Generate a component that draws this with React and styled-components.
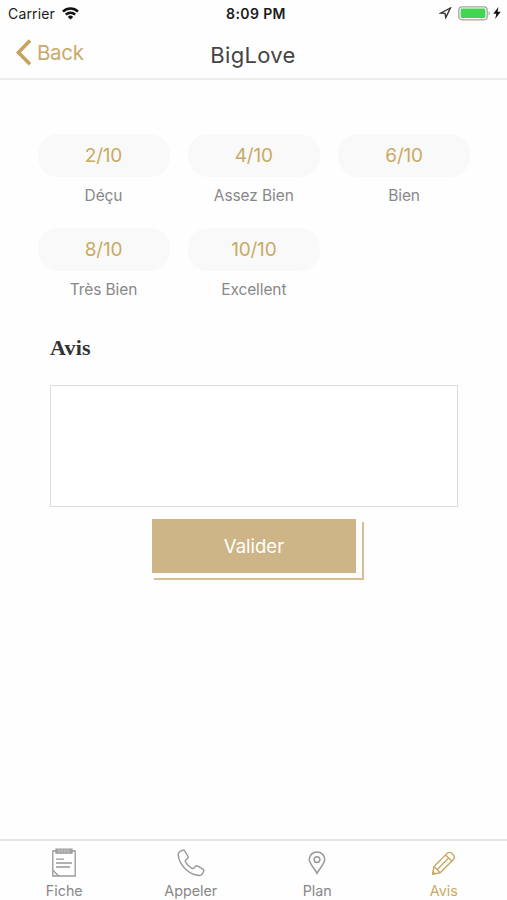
import styled, { createGlobalStyle } from 'styled-components'

const ratings = [
    { score: '2/10', label: 'Déçu' },
    { score: '4/10', label: 'Assez Bien' },
    { score: '6/10', label: 'Bien' },
    { score: '8/10', label: 'Très Bien' },
    { score: '10/10', label: 'Excellent' },
]

const WifiIcon = () => (
    <svg width="17" height="13" viewBox="0 0 17 13" fill="none" stroke="#111" strokeWidth="2.5">
        <path d="M1 4.6a10.7 10.7 0 0 1 15 0" />
        <path d="M3.8 7.6a6.7 6.7 0 0 1 9.4 0" />
        <path d="M8.5 12.6L5.8 9.9a3.9 3.9 0 0 1 5.4 0z" fill="#111" stroke="none" />
    </svg>
)

const LocationIcon = () => (
    <svg width="13" height="12" viewBox="0 0 13 12" fill="none" stroke="#333" strokeWidth="1.4">
        <path d="M11.4 1L1.6 6.2l4.4.2.8 4.2z" />
    </svg>
)

const BatteryIcon = () => (
    <svg width="33" height="15" viewBox="0 0 33 15">
        <rect x="0.8" y="0.8" width="28.4" height="13" rx="3.2" fill="#fff" stroke="#a3a3a3" strokeWidth="1.3" />
        <rect x="2.6" y="2.6" width="24.8" height="9.4" rx="1.4" fill="#43d551" />
        <path d="M30.6 5.2c1.6.5 1.6 3.7 0 4.2z" fill="#a3a3a3" />
    </svg>
)

const BoltIcon = () => (
    <svg width="8" height="12" viewBox="0 0 8 12" fill="#111">
        <path d="M5.4 0L0.3 6.8h3L2.2 12l5.5-7.2H4.6z" />
    </svg>
)

const ChevronIcon = () => (
    <svg width="17" height="27" viewBox="0 0 17 27" fill="none" stroke="#c6a35c" strokeWidth="3.5">
        <path d="M15 1.6L3.4 13.4L15 25.2" />
    </svg>
)

const NoteIcon = () => (
    <svg width="26" height="30" viewBox="0 0 26 30" fill="none" stroke="#999" strokeWidth="1.3">
        <path d="M5 3H1.8v25h22.4V3H21" />
        <path d="M5 1.2h16v4H5z" fill="#aaa" stroke="#999" />
        <path d="M8 1v4M11 1v4M14 1v4M17 1v4" stroke="#ccc" strokeWidth="0.7" />
        <path d="M5 11.2h8M5 15h16M5 19h14M1.8 22.3l6 5.7" />
    </svg>
)

const PhoneIcon = () => (
    <svg width="28" height="28" viewBox="0 0 28 28" fill="none" stroke="#999" strokeWidth="1.4" strokeLinejoin="round">
        <path d="M2.8 2.6L5.3 1.3c1-.5 2 0 2.5.8l3 4.9c.6 1 .3 2-.5 2.7L8.8 11c-.7.7-.6 1.5-.1 2.3 1.5 2.5 3.4 4.4 5.9 5.9.8.5 1.6.6 2.3-.1l1.4-1.6c.7-.8 1.7-1 2.6-.4l4.9 3c1 .6 1.2 1.6.7 2.5l-1.4 2.5c-.7 1.3-2 1.6-3.4 1.4C11.5 25.5 2.5 16.5 1.2 6.200c-.1-1.5.3-2.9 1.6-3.600z" />
    </svg>
)

const PinIcon = () => (
    <svg width="18" height="24" viewBox="0 0 18 24" fill="none" stroke="#999" strokeWidth="1.5">
        <path d="M9 22.3C6.800 18.1 1.3 12.6 1.3 8.6a7.7 7.700 0 0 1 15.4 0c0 4-5.5 9.5-7.7 13.7z" />
        <circle cx="9" cy="8.6" r="2.9" />
    </svg>
)

const PencilIcon = () => (
    <svg width="25" height="25" viewBox="0 0 25 25" fill="none" stroke="#c9aa64" strokeWidth="1.4" strokeLinejoin="round">
        <path d="M1.5 23.3L3 15.5 16 2.5c1.5-1.5 3.6-1.5 5 0l1.2 1.2c1.5 1.5 1.5 3.5 0 5L9.200 21.7z" />
        <path d="M14.6 3.900l6.200 6.200M3 15.5l6.200 6.200M6 18.700L17.700 7M1.900 20.800l2 2" />
    </svg>
)

const tabs = [
    { name: 'Fiche', Icon: NoteIcon },
    { name: 'Appeler', Icon: PhoneIcon },
    { name: 'Plan', Icon: PinIcon },
    { name: 'Avis', Icon: PencilIcon, active: true },
]

const App = () => {
    return (
        <Container>
            <GlobalStyle />
            <StatusBar>
                <Carrier>
                    Carrier
                    <WifiIcon />
                </Carrier>
                <Time>8:09 PM</Time>
                <Power>
                    <LocationIcon />
                    <BatteryIcon />
                    <BoltIcon />
                </Power>
            </StatusBar>
            <Nav>
                <Back>
                    <ChevronIcon />
                    Back
                </Back>
                <Title>BigLove</Title>
            </Nav>
            <Content>
                <Ratings>
                    {ratings.map(({ score, label }) => (
                        <Rating key={score}>
                            <Score>{score}</Score>
                            <Label>{label}</Label>
                        </Rating>
                    ))}
                </Ratings>
                <Form>
                    <h2>Avis</h2>
                    <Review aria-label="Avis" />
                    <Submit type="button">Valider</Submit>
                </Form>
            </Content>
            <TabBar>
                {tabs.map(({ name, Icon, active }) => (
                    <Tab key={name} $active={active}>
                        <TabIcon>
                            <Icon />
                        </TabIcon>
                        {name}
                    </Tab>
                ))}
            </TabBar>
        </Container>
    )
}

const GlobalStyle = createGlobalStyle`
    *, *::after {
        box-sizing: border-box;
    }
    body {
        margin: 0;
        background: #fff;
        font-family: Inter, "Liberation Sans", sans-serif;
    }
    svg {
        display: block;
        flex-shrink: 0;
    }
`

const Container = styled.div`
    display: flex;
    flex-direction: column;
    width: 507px;
    height: 900px;
    background: #fefefe;
    overflow: hidden;
`

const StatusBar = styled.div`
    display: grid;
    grid-template-columns: 1fr auto 1fr;
    align-items: center;
    height: 28px;
    padding: 0 6px 2px 8px;
    color: #1b1b1b;
    font-size: 14px;
`

const Carrier = styled.div`
    display: flex;
    align-items: center;
    gap: 7px;
    letter-spacing: 0.15px;
`

const Time = styled.div`
    font-weight: 600;
    letter-spacing: 0.4px;
    padding-left: 3px;
`

const Power = styled.div`
    display: flex;
    align-items: center;
    justify-content: flex-end;
    & > svg:first-child {
        margin-right: 6px;
    }
    & > svg:last-child {
        margin-left: 2px;
    }
`

const Nav = styled.nav`
    display: grid;
    grid-template-columns: 1fr auto 1fr;
    height: 52px;
    padding: 0 16px 0 15px;
    border-bottom: 2px solid #ededed;
`

const Back = styled.button`
    display: flex;
    align-items: center;
    gap: 5px;
    height: 49px;
    padding: 0;
    border: none;
    background: none;
    font-family: inherit;
    font-size: 20.5px;
    letter-spacing: -0.3px;
    color: #c9aa6a;
    cursor: pointer;
`

const Title = styled.h1`
    margin: 0;
    font-size: 22px;
    font-weight: 400;
    line-height: 54px;
    letter-spacing: 0.3px;
    color: #444;
`

const Content = styled.main`
    flex: 1;
    padding: 54px 36px 0 37.5px;
`

const Ratings = styled.div`
    display: grid;
    grid-template-columns: repeat(3, 132px);
    column-gap: 18.3px;
    row-gap: 21px;
`

const Rating = styled.div`
    text-align: center;
`

const Score = styled.button`
    display: block;
    width: 100%;
    height: 43px;
    padding: 0;
    border: none;
    border-radius: 20px;
    background: #f9f9f9;
    font-family: inherit;
    font-size: 19px;
    letter-spacing: -0.2px;
    color: #c9aa64;
    cursor: pointer;
`

const Label = styled.div`
    margin-top: 8px;
    height: 22px;
    font-size: 15.5px;
    line-height: 22px;
    letter-spacing: -0.1px;
    color: #888;
`

const Form = styled.form`
    display: flex;
    flex-direction: column;
    padding: 33px 12.5px 0;
    h2 {
        margin: 0;
        font-family: "Liberation Serif", serif;
        font-size: 22px;
        line-height: 28px;
        font-weight: 700;
        letter-spacing: 0.2px;
        color: #333;
    }
`

const Review = styled.textarea`
    width: 408px;
    height: 122px;
    margin-top: 23px;
    padding: 10px;
    border: 1px solid #dcdcdc;
    background: #fff;
    resize: none;
    outline: none;
`

const Submit = styled.button`
    position: relative;
    width: 204px;
    height: 54px;
    margin: 12px 0 0 102px;
    padding: 0;
    border: none;
    background: #cdb587;
    font-family: inherit;
    font-size: 18.5px;
    color: #fff;
    cursor: pointer;
    /* offset outline behind the button */
    &::after {
        content: "";
        position: absolute;
        top: 3px;
        left: 2px;
        width: 210px;
        height: 58px;
        border: solid #d7bf90;
        border-width: 0 2px 2px 0;
    }
`

const TabBar = styled.footer`
    display: grid;
    grid-template-columns: repeat(4, 1fr);
    height: 61px;
    padding-left: 1px;
    border-top: 2px solid #e4e4e4;
`

const Tab = styled.a`
    display: flex;
    flex-direction: column;
    align-items: center;
    font-size: 14.3px;
    line-height: 18px;
    color: ${({ $active }) => ($active ? '#c9aa64' : '#888')};
    cursor: pointer;
`

const TabIcon = styled.span`
    display: flex;
    align-items: center;
    height: 30px;
    margin: 7px 0 4px;
`

export default App
